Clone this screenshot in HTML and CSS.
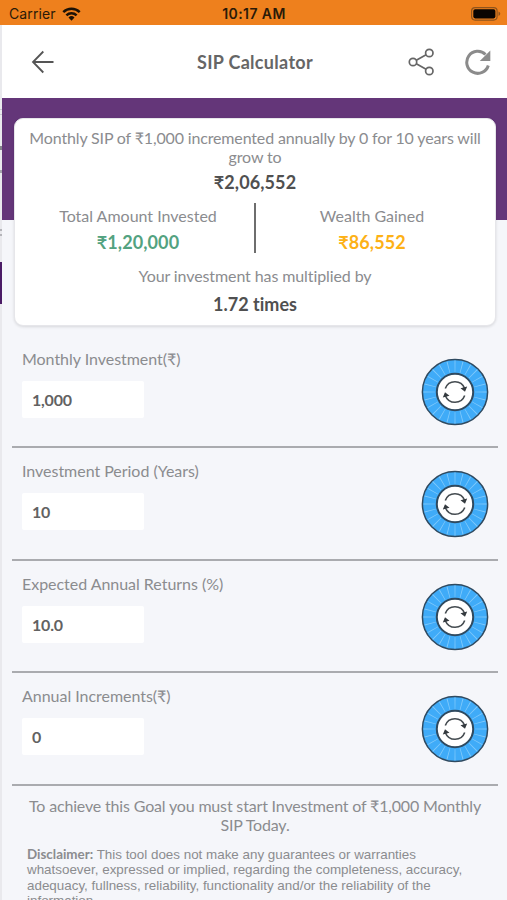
FILE: index.html
```html
<!DOCTYPE html>
<html lang="en">
<head>
<meta charset="utf-8">
<title>SIP Calculator</title>
<link rel="stylesheet" href="styles.css">
</head>
<body>
<svg class="defs" width="0" height="0" aria-hidden="true">
  <symbol id="dial" viewBox="0 0 68 68">
    <circle cx="34" cy="34" r="32.6" fill="#3fabf8" stroke="#2f4a60" stroke-width="1.5"/>
    <circle cx="34" cy="34" r="25.5" fill="none" stroke="#80c9fb" stroke-width="12" pathLength="240" stroke-dasharray="1.2 8.8" stroke-dashoffset="0.6"/>
    <circle cx="34" cy="34" r="18.2" fill="#fff" stroke="#2f4a60" stroke-width="2"/>
    <g fill="none" stroke="#444b50" stroke-width="1.6">
      <path d="M24.300 30.500A10.300 10.300 0 0 1 43.600 30.300"/>
      <path d="M43.700 37.500A10.300 10.300 0 0 1 24.400 37.700"/>
    </g>
    <path fill="#343a3f" d="M39.500 30.300l6.700-1.800-2.200 5.200zM28.500 37.700l-6.700 1.800 2.200-5.200z"/>
  </symbol>
</svg>
<div class="screen">
  <header class="status">
    <div class="carrier"><span>Carrier</span>
      <svg width="19" height="14" viewBox="0 0 19 14"><g fill="none" stroke="#1d1206" stroke-width="2.500"><path d="M1.300 5.200a11.700 11.700 0 0 1 16.400 0"/><path d="M4.400 8.400a7.300 7.300 0 0 1 10.200 0"/></g><path fill="#1d1206" d="M9.500 13.700L6.500 10.500a4.300 4.300 0 0 1 6 0z"/></svg>
    </div>
    <div class="clock">10:17 AM</div>
    <svg class="battery" width="30" height="14" viewBox="0 0 30 14"><rect x=".6" y=".6" width="25.500" height="12.500" rx="3.500" fill="none" stroke="#8f541d" stroke-width="1.200"/><rect x="2.300" y="2.300" width="22.100" height="9.100" rx="1.800" fill="#090502"/><path d="M27.500 4.500v4.500q1.800-.6 1.800-2.200t-1.800-2.300z" fill="#8f541d"/></svg>
  </header>
  <div class="body">
    <aside class="edge"><i class="edge-mark"></i></aside>
    <main class="page">
      <nav class="toolbar">
        <svg class="back" width="24" height="24" viewBox="0 0 24 24" fill="none" stroke="#555" stroke-width="1.800"><path d="M12.300 1.500L2 12l10.300 10.500M2 12h20.500"/></svg>
        <h1>SIP Calculator</h1>
        <svg class="share" width="27" height="28" viewBox="0 0 27 28" fill="none" stroke="#666" stroke-width="1.700"><circle cx="5" cy="14" r="3.700"/><circle cx="21.300" cy="5" r="3.700"/><circle cx="21.300" cy="23" r="3.700"/><path d="M8.300 12.200l9.800-5.400M8.300 15.800l9.800 5.400"/></svg>
        <svg class="reload" width="27" height="26" viewBox="0 0 27 26"><path d="M24.300 16.500A11 11 0 1 1 21.500 5.500" fill="none" stroke="#8b8b8b" stroke-width="3"/><path d="M26.300 1.500v10.500H15.800z" fill="#8b8b8b"/></svg>
      </nav>
      <div class="content">
        <section class="card">
          <p class="note lead">Monthly SIP of ₹1,000 incremented annually by 0 for 10 years will<br>grow to</p>
          <p class="amount total">₹2,06,552</p>
          <div class="split">
            <div class="half"><p class="note">Total Amount Invested</p><p class="amount green">₹1,20,000</p></div>
            <div class="bar"></div>
            <div class="half"><p class="note">Wealth Gained</p><p class="amount gold">₹86,552</p></div>
          </div>
          <p class="note multiplied">Your investment has multiplied by</p>
          <p class="amount times">1.72 times</p>
        </section>
        <section class="fields">
          <div class="field"><div><p class="label">Monthly Investment(₹)</p><div class="value">1,000</div></div><svg class="dial"><use href="#dial"/></svg></div>
          <div class="field"><div><p class="label">Investment Period (Years)</p><div class="value">10</div></div><svg class="dial"><use href="#dial"/></svg></div>
          <div class="field"><div><p class="label">Expected Annual Returns (%)</p><div class="value">10.0</div></div><svg class="dial"><use href="#dial"/></svg></div>
          <div class="field"><div><p class="label">Annual Increments(₹)</p><div class="value">0</div></div><svg class="dial"><use href="#dial"/></svg></div>
        </section>
        <p class="goal">To achieve this Goal you must start Investment of ₹1,000 Monthly<br>SIP Today.</p>
        <p class="disclaimer"><b>Disclaimer:</b> This tool does not make any guarantees or warranties<br>whatsoever, expressed or implied, regarding the completeness, accuracy,<br>adequacy, fullness, reliability, functionality and/or the reliability of the<br>information.</p>
      </div>
    </main>
  </div>
</div>
</body>
</html>
```
FILE: styles.css
```css
* { box-sizing: border-box; }
body { margin: 0; font-family: Lato, sans-serif; font-variant-ligatures: none; color: #8b8c8f; }
p, h1 { margin: 0; white-space: nowrap; }
svg { display: block; flex: none; }
.defs { position: absolute; }
.screen { height: 900px; overflow: hidden; display: flex; flex-direction: column; }
.status { flex: none; height: 25px; background: #ee801d; display: grid; grid-template-columns: 1fr auto 1fr; align-items: center; padding: 2px 6px 0 9px; color: #2a1a08; font-family: Inter, sans-serif; }
.carrier { display: flex; align-items: center; gap: 6px; font-size: 14px; letter-spacing: .1px; }
.clock { font-size: 14px; font-weight: 600; letter-spacing: .4px; margin-right: 2px; }
.battery { justify-self: end; }
.body { flex: 1; min-height: 0; display: grid; grid-template-columns: 2px 1fr; }
.edge { padding-top: 237px; background: linear-gradient(#c9c9d0, #c9c9d0) 0 84px / 2px 1px no-repeat, linear-gradient(#c9c9d0, #c9c9d0) 0 89px / 2px 1px no-repeat, linear-gradient(#85858c, #85858c) 0 121px / 2px 4px no-repeat, linear-gradient(#a5a5ac, #a5a5ac) 0 145px / 2px 3px no-repeat, linear-gradient(#b5b5ba, #b5b5ba) 0 204px / 2px 2px no-repeat, linear-gradient(#b5b5ba, #b5b5ba) 0 209px / 2px 2px no-repeat, #e9e9ed; }
.edge-mark { display: block; height: 42px; background: #4b1c66; }
.page { min-width: 0; min-height: 0; overflow: hidden; }
.toolbar { height: 73px; background: #fff; display: flex; align-items: center; padding: 0 16px 0 29px; }
.toolbar h1 { flex: 1; padding-left: 47px; text-align: center; font-size: 18px; line-height: 24px; font-weight: 700; letter-spacing: .3px; color: #666; }
.share { margin-right: 29px; }
.content { background: linear-gradient(#643679 122.500px, #f5f6fa 122.500px); padding: 20px 11px 0 12px; height: 802px; }
.card { height: 208px; background: #fff; border: 1px solid #e6e6ea; border-radius: 9px; box-shadow: 0 1px 3px rgba(0,0,0,.12); padding-top: 9px; text-align: center; }
.note { font-size: 16px; line-height: 19px; }
.lead { letter-spacing: -.15px; }
.amount { font-size: 18px; line-height: 22px; font-weight: 700; color: #505050; }
.total { margin-top: 5px; letter-spacing: .1px; }
.split { display: grid; grid-template-columns: 1fr 2px 1fr; height: 50px; margin-top: 10px; }
.half { padding-top: 3px; }
.half .amount { margin-top: 6px; letter-spacing: .1px; }
.half:first-child { padding-left: 7px; }
.half:last-child { padding-right: 7px; }
.bar { background: #6e6e6e; }
.green { color: #53a280; }
.gold { color: #fdb116; }
.multiplied { margin-top: 13px; letter-spacing: -.1px; }
.times { margin-top: 8px; }
.fields { margin: 10px -2px 0 -2px; }
.field { height: 112.4px; border-bottom: 2px solid #aaabaf; display: flex; justify-content: space-between; padding: 13px 9px 0 10px; }
.label { font-size: 16px; line-height: 20px; letter-spacing: -.03px; }
.value { margin-top: 12px; width: 122px; height: 37px; border-radius: 2px; background: #fff; padding-left: 10px; font-size: 16px; line-height: 38px; font-weight: 700; color: #626262; letter-spacing: -.2px; }
.dial { width: 68px; height: 68px; margin-top: 9px; }
.goal { margin-top: 10px; text-align: center; font-size: 16px; line-height: 19px; letter-spacing: -.17px; }
.disclaimer { margin: 13px 0 0 13px; font-family: "Liberation Sans", sans-serif; font-size: 13.4px; line-height: 15.500px; }
.disclaimer b { font-family: Lato, sans-serif; line-height: 1; }
```
